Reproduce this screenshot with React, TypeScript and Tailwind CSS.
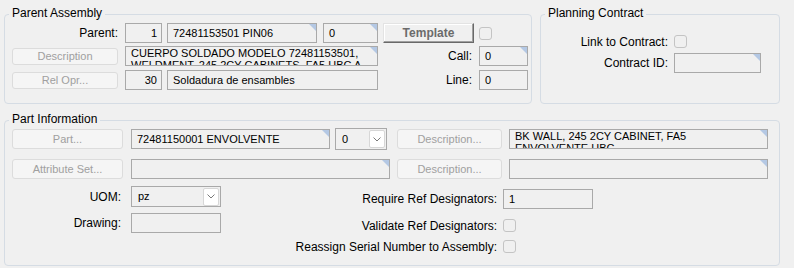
import React from "react";

const Corner = () => (
  <span className="absolute right-0 top-0 h-0 w-0 border-l-[7px] border-t-[7px] border-l-transparent border-t-[#b4c8e4]" />
);

function Field({
  className = "",
  corner = false,
  right = false,
  children,
}: {
  className?: string;
  corner?: boolean;
  right?: boolean;
  children?: React.ReactNode;
}) {
  return (
    <div
      className={`relative flex h-[20px] shrink-0 items-center overflow-hidden border border-[#a9a9a9] bg-[#f0f0f0] text-[11px] leading-none text-black ${
        right ? "justify-end pr-[4px]" : "pl-[5px]"
      } ${className}`}
    >
      <span className="whitespace-nowrap">{children}</span>
      {corner && <Corner />}
    </div>
  );
}

function MultiField({ className = "", lines }: { className?: string; lines: string[] }) {
  return (
    <div
      className={`relative h-[20px] shrink-0 overflow-hidden border border-[#a9a9a9] bg-[#f0f0f0] pl-[5px] text-[11px] leading-[12px] text-black ${className}`}
    >
      {lines.map((l, i) => (
        <div key={i} className="whitespace-nowrap">
          {l}
        </div>
      ))}
      <Corner />
    </div>
  );
}

function DisBtn({ className = "", children }: { className?: string; children: React.ReactNode }) {
  return (
    <button
      type="button"
      disabled
      className={`flex shrink-0 items-center justify-center rounded-[3px] border border-[#dcdcdc] bg-[#f5f5f5] text-[11px] leading-none text-[#a0a0a0] ${className}`}
    >
      {children}
    </button>
  );
}

const Check = () => (
  <span className="block h-[13px] w-[13px] shrink-0 rounded-[3px] border border-[#c4c4c4] bg-[#f0f0f0]" />
);

const Chevron = () => (
  <svg width="8" height="5" viewBox="0 0 8 5" fill="none">
    <polyline points="0.5,0.5 4,4 7.5,0.5" stroke="#7a7a7a" strokeWidth="1" />
  </svg>
);

function Combo({ className = "", value }: { className?: string; value: string }) {
  return (
    <div
      className={`relative flex shrink-0 items-center border border-[#a9a9a9] bg-[#f0f0f0] pl-[6px] text-[11px] leading-none text-black ${className}`}
    >
      <span>{value}</span>
      <span className="ml-auto mr-[1px] flex h-[18px] w-[16px] items-center justify-center rounded-[2px] border border-[#d7d7d7] bg-white">
        <Chevron />
      </span>
    </div>
  );
}

function Group({
  title,
  className = "",
  children,
}: {
  title: string;
  className?: string;
  children: React.ReactNode;
}) {
  return (
    <div className={`relative shrink-0 rounded-[4px] border border-[#d5dce4] ${className}`}>
      <span className="absolute left-[4px] top-[-9px] bg-[#f0f0f0] px-[3px] text-[12px] leading-[14px] text-black">
        {title}
      </span>
      {children}
    </div>
  );
}

const Label = ({ className = "", children }: { className?: string; children: React.ReactNode }) => (
  <div className={`shrink-0 whitespace-nowrap text-right text-[12px] leading-none text-black ${className}`}>
    {children}
  </div>
);

export default function App() {
  return (
    <div className="h-[268px] w-[794px] overflow-hidden bg-[#f0f0f0] pl-[4px] pt-[14px] font-['Liberation_Sans',Arial,sans-serif]">
      <div className="flex">
        <Group title="Parent Assembly" className="h-[90px] w-[528px]">
          <div className="flex flex-col pl-[7px] pt-[8px]">
            <div className="flex h-[20px] items-center">
              <Label className="w-[106px]">Parent:</Label>
              <Field right className="ml-[7px] w-[37px]">
                1
              </Field>
              <Field corner className="ml-[5px] w-[150px]">
                72481153501 PIN06
              </Field>
              <Field corner className="ml-[6px] w-[55px]">
                0
              </Field>
              <button
                type="button"
                className="ml-[5px] flex h-[20px] w-[91px] shrink-0 items-center justify-center border border-b-[#696969] border-l-[#e3e3e3] border-r-[#696969] border-t-[#e3e3e3] bg-[#f0f0f0] text-[12px] font-bold leading-none text-[#6b6b6b] shadow-[inset_-1px_-1px_#a0a0a0,inset_1px_1px_#ffffff]"
              >
                Template
              </button>
              <div className="ml-[5px]">
                <Check />
              </div>
            </div>
            <div className="mt-[3px] flex h-[20px] items-center">
              <DisBtn className="h-[17px] w-[106px]">Description</DisBtn>
              <MultiField
                className="ml-[7px] w-[253px]"
                lines={["CUERPO SOLDADO MODELO 72481153501,", "WELDMENT, 245 2CY CABINETS, FA5 HBC A"]}
              />
              <Label className="w-[96px] pr-[2px]">Call:</Label>
              <Field corner className="ml-[5px] w-[49px]">
                0
              </Field>
            </div>
            <div className="mt-[4px] flex h-[20px] items-center">
              <DisBtn className="h-[17px] w-[106px]">Rel Opr...</DisBtn>
              <Field right className="ml-[7px] w-[37px]">
                30
              </Field>
              <Field className="ml-[5px] w-[211px]">Soldadura de ensambles</Field>
              <Label className="w-[96px] pr-[2px]">Line:</Label>
              <Field className="ml-[5px] w-[49px]">0</Field>
            </div>
          </div>
        </Group>
        <Group title="Planning Contract" className="ml-[8px] h-[90px] w-[240px]">
          <div className="flex flex-col pt-[20px]">
            <div className="flex h-[13px] items-center">
              <Label className="w-[127px]">Link to Contract:</Label>
              <div className="ml-[6px]">
                <Check />
              </div>
            </div>
            <div className="mt-[5px] flex h-[20px] items-center">
              <Label className="w-[127px]">Contract ID:</Label>
              <Field corner className="ml-[6px] w-[87px]" />
            </div>
          </div>
        </Group>
      </div>
      <Group title="Part Information" className="mt-[16px] h-[146px] w-[776px]">
        <div className="flex flex-col pl-[7px] pt-[8px]">
          <div className="flex h-[20px] items-center">
            <DisBtn className="h-[20px] w-[111px]">Part...</DisBtn>
            <Field corner className="ml-[8px] w-[199px]">
              72481150001 ENVOLVENTE
            </Field>
            <Combo className="ml-[5px] h-[22px] w-[52px]" value="0" />
            <DisBtn className="ml-[10px] h-[20px] w-[105px]">Description...</DisBtn>
            <MultiField
              className="ml-[7px] w-[259px]"
              lines={["BK WALL, 245 2CY CABINET, FA5", "ENVOLVENTE HBC"]}
            />
          </div>
          <div className="mt-[10px] flex h-[20px] items-center">
            <DisBtn className="h-[20px] w-[111px]">Attribute Set...</DisBtn>
            <Field corner className="ml-[8px] w-[259px]" />
            <DisBtn className="ml-[7px] h-[20px] w-[105px]">Description...</DisBtn>
            <Field corner className="ml-[7px] w-[259px]" />
          </div>
          <div className="flex items-start">
            <div className="flex flex-col pt-[7px]">
              <div className="flex h-[21px] items-center">
                <Label className="w-[109px]">UOM:</Label>
                <Combo className="ml-[10px] h-[21px] w-[90px]" value="pz" />
              </div>
              <div className="mt-[6px] flex h-[20px] items-center">
                <Label className="w-[109px]">Drawing:</Label>
                <Field className="ml-[10px] w-[90px]" />
              </div>
            </div>
            <div className="ml-[66px] flex flex-col pt-[10px]">
              <div className="flex h-[20px] items-center">
                <Label className="w-[210px]">Require Ref Designators:</Label>
                <Field className="ml-[6px] w-[90px]">1</Field>
              </div>
              <div className="mt-[10px] flex h-[13px] items-center">
                <Label className="w-[210px]">Validate Ref Designators:</Label>
                <div className="ml-[6px]">
                  <Check />
                </div>
              </div>
              <div className="mt-[8px] flex h-[13px] items-center">
                <Label className="w-[210px]">Reassign Serial Number to Assembly:</Label>
                <div className="ml-[6px]">
                  <Check />
                </div>
              </div>
            </div>
          </div>
        </div>
      </Group>
    </div>
  );
}
